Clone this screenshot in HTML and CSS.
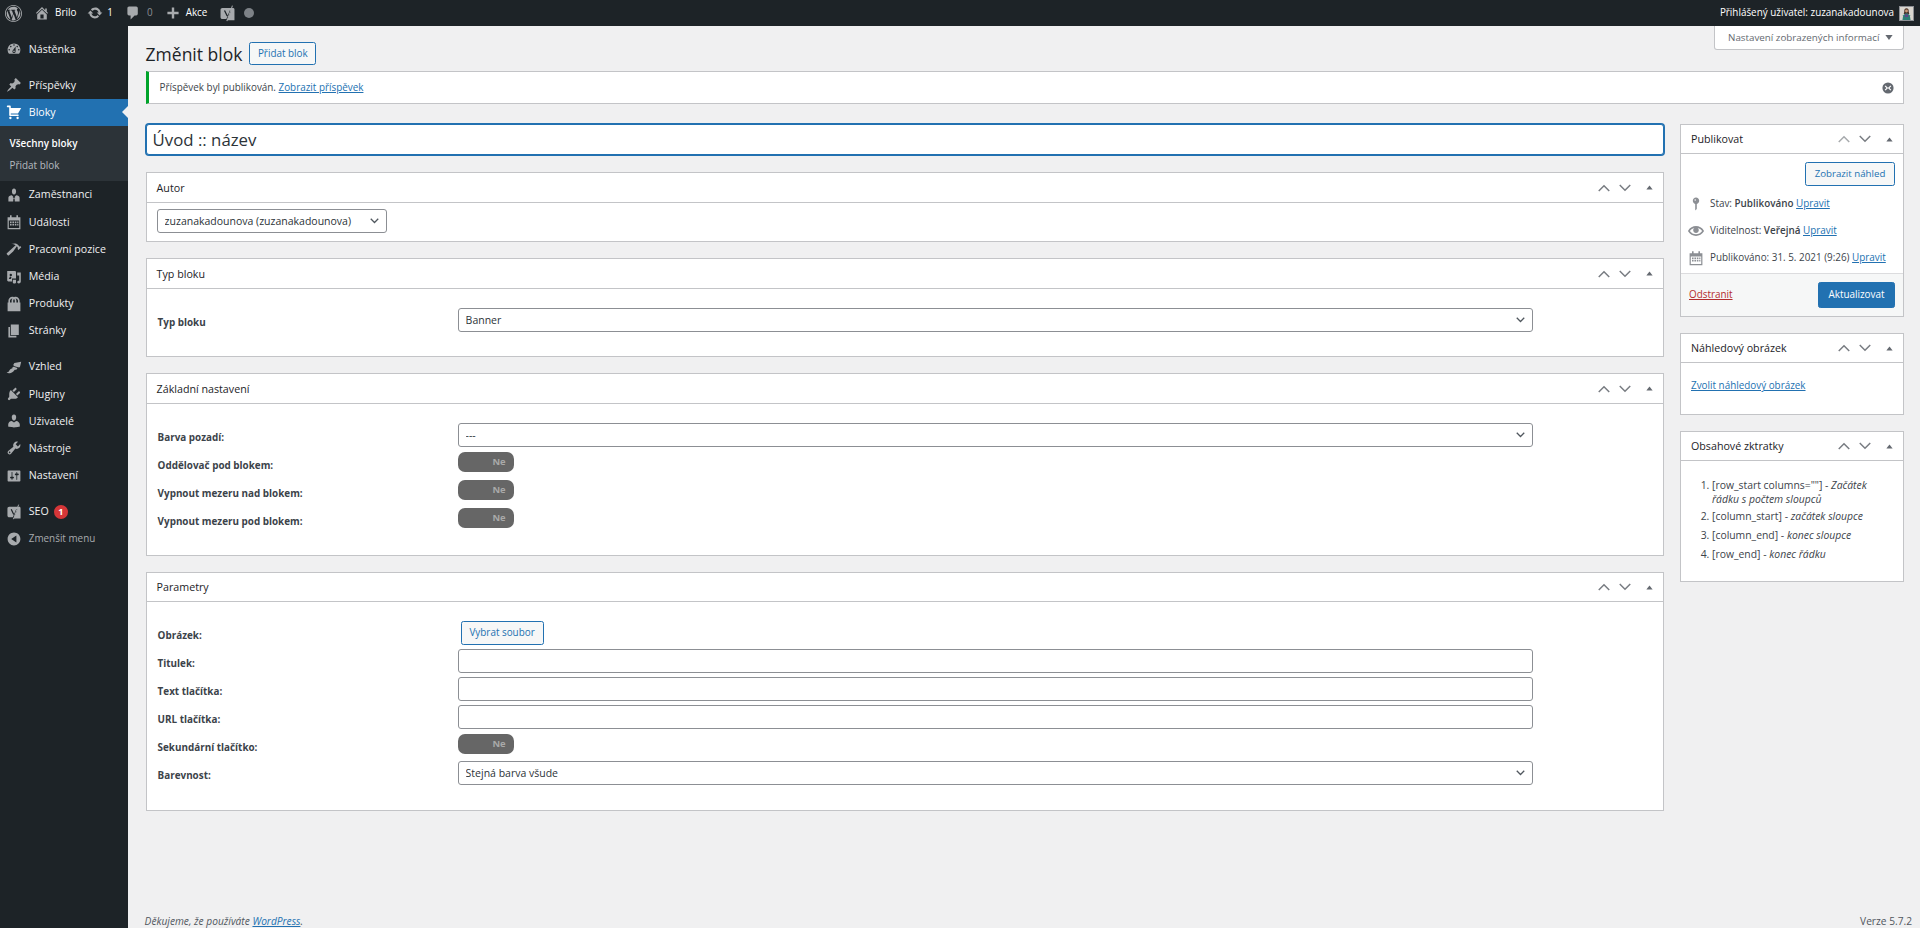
FILE: index.html
```html
<!DOCTYPE html>
<html lang="cs">
<head>
<meta charset="utf-8">
<title>Změnit blok</title>
<link rel="stylesheet" href="styles.css">
</head>
<body>
<svg class="defs" width="0" height="0" aria-hidden="true">
  <symbol id="i-up" viewBox="0 0 16 10"><path d="M1 9l7-7 7 7" fill="none" stroke="currentColor" stroke-width="2"/></symbol>
  <symbol id="i-down" viewBox="0 0 16 10"><path d="M1 1l7 7 7-7" fill="none" stroke="currentColor" stroke-width="2"/></symbol>
  <symbol id="i-tri" viewBox="0 0 10 6"><path d="M5 0l4.500 6h-9z" fill="currentColor"/></symbol>
  <symbol id="i-yoast" viewBox="0 0 20 20"><path fill="currentColor" d="M4 3.500h12.500c1 0 1.700.7 1.700 1.700V18H8.500l1-1.500H4c-1.300 0-2.200-.9-2.200-2.200V5.700C1.800 4.400 2.700 3.500 4 3.500z"/><path fill="none" stroke="#1d2327" stroke-width="1.500" d="M6.500 6.500l3.200 6.500M13.500 6.500l-4.500 11"/><path fill="none" stroke="currentColor" stroke-width="1.200" d="M15.800.8L9.300 19"/></symbol>
</svg>

<header class="adminbar">
  <div class="bar-left">
    <span class="bar-item bar-logo"><svg class="bar-icon" viewBox="0 0 20 20"><path d="M20 10c0-5.520-4.480-10-10-10S0 4.480 0 10s4.480 10 10 10 10-4.480 10-10zM10 1.010c4.970 0 8.990 4.020 8.990 8.990s-4.020 8.990-8.990 8.990S1.010 14.970 1.010 10 5.030 1.010 10 1.010zM8.010 14.820L4.960 6.610c.49-.03 1.050-.08 1.050-.08.43-.05.38-1.010-.06-.99 0 0-1.290.1-2.130.1-.15 0-.33 0-.52-.01 1.440-2.170 3.900-3.600 6.700-3.600 2.090 0 3.990.79 5.410 2.090-.6-.09-1.450.35-1.450 1.450 0 .68.38 1.250.8 1.920.31.55.5 1.250.5 2.280 0 1.390-1.300 4.660-1.300 4.660l-2.830-7.790c.5-.03.76-.17.76-.17.45-.05.39-1.010-.06-.99 0 0-1.430.12-2.350.12-.85 0-2.200-.12-2.200-.12-.45-.02-.5.94-.05.99 0 0 .44.05.91.08l1.360 3.700-1.900 5.660zM17.200 6.500c.5 1 .8 2.200.8 3.500 0 3-1.600 5.500-4 6.900l2.400-7c.5-1.100.8-2.200.8-3.400zM2 10c0-1.200.3-2.300.7-3.300l3.800 10.500C3.900 15.900 2 13.200 2 10zM10.100 10.700l2.500 6.800.1.2c-.9.3-1.800.5-2.700.5-.8 0-1.500-.1-2.300-.3z"/></svg></span>
    <span class="bar-item bar-home"><svg class="bar-icon" viewBox="0 0 20 20"><path d="M16 8.500l1.530 1.530-1.060 1.060L10 4.620l-6.470 6.470-1.060-1.060L10 2.500l4 4v-2h2v4zm-6-2.460l6 5.990V18H4v-5.970zM12 17v-5H8v5h4z"/></svg>Brilo</span>
    <span class="bar-item bar-updates"><svg class="bar-icon" viewBox="0 0 20 20"><path d="M10.200 3.280c3.530 0 6.430 2.610 6.920 6h2.080l-3.500 4-3.500-4h2.320c-.45-1.970-2.210-3.440-4.320-3.440-1.450 0-2.730.71-3.540 1.780L4.950 5.660C6.230 4.200 8.110 3.280 10.200 3.280zm-.4 13.440c-3.520 0-6.430-2.610-6.920-6H.8l3.500-4c1.170 1.330 2.330 2.670 3.500 4H5.480c.45 1.970 2.210 3.440 4.320 3.440 1.450 0 2.730-.71 3.540-1.780l1.710 1.950c-1.280 1.460-3.150 2.390-5.250 2.390z"/></svg>1</span>
    <span class="bar-item bar-comments"><svg class="bar-icon" viewBox="0 0 20 20"><path d="M5 2h9c1.100 0 2 .9 2 2v7c0 1.100-.9 2-2 2h-2l-5 5v-5H5c-1.100 0-2-.9-2-2V4c0-1.100.9-2 2-2z"/></svg><span class="bar-dim">0</span></span>
    <span class="bar-item bar-new"><svg class="bar-icon" viewBox="0 0 20 20"><path d="M17 8.500v3h-5.500V17h-3v-5.500H3v-3h5.500V3h3v5.500z"/></svg>Akce</span>
    <span class="bar-item bar-yoast"><svg class="bar-icon yoast-icon"><use href="#i-yoast"/></svg><span class="bar-dot"></span></span>
  </div>
  <div class="bar-right">Přihlášený uživatel: zuzanakadounova
    <svg class="avatar" viewBox="0 0 16 16"><rect width="16" height="16" fill="#d9d6cf"/><path d="M5.300 5.500C5 2.500 6.400 1.500 8 1.500s3 1 2.700 4l.7 3H4.600z" fill="#4a3024"/><circle cx="8" cy="5" r="1.800" fill="#c99a78"/><path d="M3 16l1-6 2.500-2h3L12 10l1 6z" fill="#2d7f74"/><path d="M6.500 8L8 11l1.500-3 .8 4H5.700z" fill="#6a3a8c"/></svg>
  </div>
</header>

<div class="layout">
  <nav class="sidebar">
    <ul class="menu">
      <li class="menu-item"><svg class="menu-icon" viewBox="0 0 20 20"><path d="M3.760 16h12.480c1.100-1.370 1.760-3.110 1.760-5 0-4.420-3.580-8-8-8s-8 3.580-8 8c0 1.890.66 3.630 1.760 5zM10 4c.55 0 1 .45 1 1s-.45 1-1 1-1-.45-1-1 .45-1 1-1zM6 6c.55 0 1 .45 1 1s-.45 1-1 1-1-.45-1-1 .45-1 1-1zm8 0c.55 0 1 .45 1 1s-.45 1-1 1-1-.45-1-1 .45-1 1-1zm-5.370 5.550L12 7v6c0 1.100-.9 2-2 2s-2-.9-2-2c0-.57.24-1.080.63-1.450zM4 10c.55 0 1 .45 1 1s-.45 1-1 1-1-.45-1-1 .45-1 1-1zm12 0c.55 0 1 .45 1 1s-.45 1-1 1-1-.45-1-1 .45-1 1-1zm-5 3c0-.55-.45-1-1-1s-1 .45-1 1 .45 1 1 1 1-.45 1-1z" fill-rule="evenodd"/></svg>Nástěnka</li>
      <li class="menu-sep"></li>
      <li class="menu-item"><svg class="menu-icon" viewBox="0 0 20 20"><path d="M10.440 3.020l1.820-1.820 6.360 6.350-1.830 1.820c-1.050-.68-2.480-.57-3.410.36l-.75.75c-.92.93-1.040 2.350-.35 3.410l-1.830 1.820-2.410-2.410-2.800 2.790c-.42.42-3.380 2.710-3.800 2.290s1.860-3.390 2.280-3.810l2.790-2.790L4.100 9.360l1.830-1.820c1.050.69 2.480.57 3.400-.36l.75-.75c.93-.92 1.050-2.350.36-3.410z"/></svg>Příspěvky</li>
      <li class="menu-item is-current"><svg class="menu-icon" viewBox="0 0 20 20"><path d="M6 13h9c.55 0 1 .45 1 1s-.45 1-1 1H5c-.55 0-1-.45-1-1V4H2c-.55 0-1-.45-1-1s.45-1 1-1h3c.55 0 1 .45 1 1v2h13l-4 7H6v1zm-.5 3c.83 0 1.500.67 1.500 1.500S6.330 19 5.500 19 4 18.330 4 17.500 4.670 16 5.500 16zm9 0c.83 0 1.500.67 1.500 1.500s-.67 1.500-1.500 1.500-1.500-.67-1.500-1.500.67-1.500 1.500-1.500z"/></svg>Bloky</li>
      <li class="submenu">
        <div class="sub-item is-active">Všechny bloky</div>
        <div class="sub-item">Přidat blok</div>
      </li>
      <li class="menu-item"><svg class="menu-icon" viewBox="0 0 20 20"><path d="M10 9.500c-1.900 0-2.600-2.200-2.600-3.900C7.400 3.500 8.400 2 10 2s2.600 1.500 2.600 3.600c0 1.700-.7 3.900-2.600 3.900zM7.300 10.200l1.700 2-.5 1.300h3l-.5-1.300 1.700-2c2.300.3 4.300 1.300 4.300 3.300V18H3v-4.500c0-2 2-3 4.300-3.300zM9.200 14.500L9 18h2l-.2-3.500z" fill-rule="evenodd"/></svg>Zaměstnanci</li>
      <li class="menu-item"><svg class="menu-icon" viewBox="0 0 20 20"><path fill-rule="evenodd" d="M5 1.500h2V4h6V1.500h2V4h3v15H2V4h3zM3.500 8v9.500h13V8zM5 9.500h2v2H5zM8 9.500h2v2H8zM11 9.500h2v2h-2zM14 9.500h1.500v2H14zM5 12.500h2v2H5zM8 12.500h2v2H8zM11 12.500h2v2h-2zM14 12.500h1.500v2H14z"/></svg>Události</li>
      <li class="menu-item"><svg class="menu-icon" viewBox="0 0 20 20"><path d="M17.700 6.320l1.410 1.420-3.470 3.410-1.420-1.420.84-.82c-.32-.76-.81-1.570-1.510-2.310l-4.610 6.590-5.260 4.700c-.39.39-1.020.39-1.420 0l-1.200-1.210c-.39-.39-.39-1.020 0-1.410l10.970-9.920c-1.370-.86-3.210-1.460-5.670-1.480 2.700-.82 4.950-.93 6.580-.3 1.700.66 2.820 2.200 3.910 3.580z"/></svg>Pracovní pozice</li>
      <li class="menu-item"><svg class="menu-icon" viewBox="0 0 20 20"><path fill-rule="evenodd" d="M1.500 2.500H11c.8 0 1.500.7 1.500 1.500v8h-5v3.500H3c-.8 0-1.500-.7-1.500-1.500zM6 6a1.500 1.500 0 1 0 0 3 1.500 1.500 0 0 0 0-3zM3.500 12.500H6l1-2-2-1zM14 4.500h4.500v11c0 1.600-1.300 2.500-2.500 2.500s-2-.8-2-1.700.9-1.700 2-1.700h.5V8H14zM8.500 13.500h4V17c0 .6-.4 1-1 1h-2c-.6 0-1-.4-1-1z"/></svg>Média</li>
      <li class="menu-item"><svg class="menu-icon" viewBox="0 0 20 20"><path fill-rule="evenodd" d="M17 8h1v11H2V8h1V6c0-2.760 2.240-5 5-5 .71 0 1.390.15 2 .42.61-.27 1.290-.42 2-.42 2.760 0 5 2.240 5 5v2zM5 6v2h2V6c0-1.130.39-2.160 1.020-3H8C6.350 3 5 4.350 5 6zm10 2V6c0-1.650-1.350-3-3-3h-.02c.63.84 1.020 1.870 1.020 3v2h2zm-5-4.220C9.390 4.330 9 5.120 9 6v2h2V6c0-.88-.39-1.670-1-2.220z"/></svg>Produkty</li>
      <li class="menu-item"><svg class="menu-icon" viewBox="0 0 20 20"><path d="M6 15V2h10v13H6zm-1 1h8v2H3V5h2v11z"/></svg>Stránky</li>
      <li class="menu-sep"></li>
      <li class="menu-item"><svg class="menu-icon" viewBox="0 0 20 20"><path d="M19 3.500l-1.500 6.300c-.3.9-1.500.9-2.500.6l-4.300-1.300C9.700 8.800 9 8 9.300 7l1.200-2zM9.500 9.800l4.800 1.500c-.6 1.900-1.800 2.500-3.300 2.200-1.100 1.100-2.100 3.100-5 3.900-1.700.4-3.700.4-5.300-.3 1.700-.3 2.700-1.100 3.300-2.300.8-1.500 1.700-2.900 4-3.300-.2-.5 0-1.100 1.500-1.700z"/></svg>Vzhled</li>
      <li class="menu-item"><svg class="menu-icon" viewBox="0 0 20 20"><path d="M13.110 4.360L9.870 7.600 8 5.730l3.240-3.240c.35-.34 1.050-.2 1.560.32.520.51.66 1.210.31 1.550zm-8 1.770l.91-1.120 9.010 9.010-1.190.84c-.71.71-2.630 1.160-3.820 1.160H6.140L4.900 17.260c-.59.59-1.540.59-2.120 0-.59-.58-.59-1.530 0-2.120l1.240-1.240v-3.880c0-1.130.4-3.190 1.090-3.890zm7.260 3.970l3.240-3.240c.34-.35 1.040-.21 1.550.31.520.51.66 1.210.31 1.550l-3.240 3.250z"/></svg>Pluginy</li>
      <li class="menu-item"><svg class="menu-icon" viewBox="0 0 20 20"><path d="M10 9.250c-2.270 0-2.730-3.440-2.730-3.440C7 4.020 7.820 2 9.970 2c2.160 0 2.980 2.020 2.710 3.810 0 0-.41 3.440-2.680 3.440zm0 2.570L12.720 10c2.390 0 4.520 2.330 4.520 4.530v2.490s-3.650 1.130-7.240 1.130c-3.650 0-7.240-1.130-7.240-1.130v-2.490c0-2.250 1.940-4.480 4.470-4.480z"/></svg>Uživatelé</li>
      <li class="menu-item"><svg class="menu-icon" viewBox="0 0 20 20"><path d="M16.680 9.770c-1.340 1.340-3.300 1.670-4.950.99l-5.410 6.520c-.99.99-2.590.99-3.580 0s-.99-2.590 0-3.570l6.520-5.420c-.68-1.650-.35-3.610.99-4.950 1.280-1.280 3.120-1.620 4.720-1.060l-2.890 2.890 2.820 2.820 2.860-2.870c.53 1.580.18 3.390-1.080 4.670zM3.810 16.210c.4.39 1.040.39 1.430 0 .4-.4.4-1.040 0-1.430-.39-.4-1.030-.4-1.430 0-.39.39-.39 1.030 0 1.430z"/></svg>Nástroje</li>
      <li class="menu-item"><svg class="menu-icon" viewBox="0 0 20 20"><path d="M18 16V4c0-.55-.45-1-1-1H3c-.55 0-1 .45-1 1v12c0 .55.45 1 1 1h14c.55 0 1-.45 1-1zM8 11h1c.55 0 1 .45 1 1s-.45 1-1 1H8v1.500c0 .28-.22.5-.5.5s-.5-.22-.5-.5V13H6c-.55 0-1-.45-1-1s.45-1 1-1h1V5.500c0-.28.22-.5.5-.5s.5.22.5.5V11zm5-2h-1c-.55 0-1-.45-1-1s.45-1 1-1h1V5.500c0-.28.22-.5.5-.5s.5.22.5.5V7h1c.55 0 1 .45 1 1s-.45 1-1 1h-1v5.500c0 .28-.22.5-.5.5s-.5-.22-.5-.5V9z" fill-rule="evenodd"/></svg>Nastavení</li>
      <li class="menu-sep"></li>
      <li class="menu-item"><svg class="menu-icon"><use href="#i-yoast"/></svg>SEO<span class="badge">1</span></li>
      <li class="menu-item menu-collapse"><svg class="menu-icon" viewBox="0 0 20 20"><path fill-rule="evenodd" d="M18 10c0-4.420-3.580-8-8-8s-8 3.580-8 8 3.580 8 8 8 8-3.580 8-8zm-5-4.500v9L6.500 10z"/></svg>Zmenšit menu</li>
    </ul>
  </nav>

  <div class="content">
    <button class="screen-tab" type="button">Nastavení zobrazených informací<svg class="screen-tri"><use href="#i-tri"/></svg></button>
    <main class="wrap">
      <div class="title-row">
        <h1 class="page-title">Změnit blok</h1>
        <a class="btn btn-outline" href="#">Přidat blok</a>
      </div>
      <div class="notice">
        <p>Příspěvek byl publikován. <a href="#">Zobrazit příspěvek</a></p>
        <svg class="notice-x" viewBox="0 0 20 20"><path fill-rule="evenodd" d="M10 2a8 8 0 1 0 0 16 8 8 0 0 0 0-16zm3.500 4.300l1.200 1.200L12.200 10l2.500 2.500-1.200 1.200-2.500-2.500-1-1-1 1-2.500 2.500-1.200-1.200L7.800 10 5.300 7.500l1.200-1.200L9 8.800l1 1 1-1z"/></svg>
      </div>

      <div class="columns">
        <div class="col-main">
          <input class="title-input" type="text" value="Úvod :: název">

          <section class="box">
            <div class="box-head"><h2>Autor</h2><div class="head-ctl"><svg class="ctl"><use href="#i-up"/></svg><svg class="ctl"><use href="#i-down"/></svg><svg class="ctl-tri"><use href="#i-tri"/></svg></div></div>
            <div class="box-body body-author">
              <select class="field field-author"><option>zuzanakadounova (zuzanakadounova)</option></select>
            </div>
          </section>

          <section class="box">
            <div class="box-head"><h2>Typ bloku</h2><div class="head-ctl"><svg class="ctl"><use href="#i-up"/></svg><svg class="ctl"><use href="#i-down"/></svg><svg class="ctl-tri"><use href="#i-tri"/></svg></div></div>
            <div class="box-body body-form">
              <div class="form-row"><label>Typ bloku</label><select class="field"><option>Banner</option></select></div>
            </div>
          </section>

          <section class="box">
            <div class="box-head"><h2>Základní nastavení</h2><div class="head-ctl"><svg class="ctl"><use href="#i-up"/></svg><svg class="ctl"><use href="#i-down"/></svg><svg class="ctl-tri"><use href="#i-tri"/></svg></div></div>
            <div class="box-body body-form">
              <div class="form-row"><label>Barva pozadí:</label><select class="field"><option>---</option></select></div>
              <div class="form-row"><label>Oddělovač pod blokem:</label><span class="toggle">Ne</span></div>
              <div class="form-row"><label>Vypnout mezeru nad blokem:</label><span class="toggle">Ne</span></div>
              <div class="form-row"><label>Vypnout mezeru pod blokem:</label><span class="toggle">Ne</span></div>
            </div>
          </section>

          <section class="box box-params">
            <div class="box-head"><h2>Parametry</h2><div class="head-ctl"><svg class="ctl"><use href="#i-up"/></svg><svg class="ctl"><use href="#i-down"/></svg><svg class="ctl-tri"><use href="#i-tri"/></svg></div></div>
            <div class="box-body body-form">
              <div class="form-row"><label>Obrázek:</label><a class="btn btn-outline btn-file" href="#">Vybrat soubor</a></div>
              <div class="form-row"><label>Titulek:</label><input class="field" type="text"></div>
              <div class="form-row"><label>Text tlačítka:</label><input class="field" type="text"></div>
              <div class="form-row"><label>URL tlačítka:</label><input class="field" type="text"></div>
              <div class="form-row"><label>Sekundární tlačítko:</label><span class="toggle">Ne</span></div>
              <div class="form-row"><label>Barevnost:</label><select class="field"><option>Stejná barva všude</option></select></div>
            </div>
          </section>
        </div>

        <aside class="col-side">
          <section class="box">
            <div class="box-head"><h2>Publikovat</h2><div class="head-ctl"><svg class="ctl is-off"><use href="#i-up"/></svg><svg class="ctl"><use href="#i-down"/></svg><svg class="ctl-tri"><use href="#i-tri"/></svg></div></div>
            <div class="pub-body">
              <div class="pub-preview"><a class="btn btn-outline" href="#">Zobrazit náhled</a></div>
              <div class="pub-row"><svg class="pub-icon" viewBox="0 0 20 20"><path fill-rule="evenodd" d="M14 6c0 1.860-1.280 3.410-3 3.860V16c0 1-2 2-2 2V9.860c-1.720-.45-3-2-3-3.860 0-2.210 1.790-4 4-4s4 1.790 4 4zM8 5c0 .55.45 1 1 1s1-.45 1-1-.45-1-1-1-1 .45-1 1z"/></svg><span>Stav: <b>Publikováno</b> <a href="#">Upravit</a></span></div>
              <div class="pub-row"><svg class="pub-icon" viewBox="0 0 20 20"><path d="M19.700 9.400C17.700 6 14 3.900 10 3.900S2.300 6 .3 9.400L0 10l.3.6c2 3.400 5.700 5.500 9.700 5.500s7.700-2.100 9.700-5.500l.3-.6-.3-.6zM10 14.100c-3.100 0-6-1.600-7.700-4.100C3.600 8 5.700 6.600 8 6.100c-.9.6-1.500 1.700-1.500 2.900 0 1.900 1.600 3.500 3.500 3.500s3.500-1.600 3.500-3.500c0-1.200-.6-2.300-1.500-2.900 2.300.5 4.400 1.900 5.700 3.900-1.700 2.500-4.600 4.100-7.700 4.100z"/></svg><span>Viditelnost: <b>Veřejná</b> <a href="#">Upravit</a></span></div>
              <div class="pub-row"><svg class="pub-icon" viewBox="0 0 20 20"><path fill-rule="evenodd" d="M5 1.500h2V4h6V1.500h2V4h3v15H2V4h3zM3.500 8v9.500h13V8zM5 9.500h2v2H5zM8 9.500h2v2H8zM11 9.500h2v2h-2zM14 9.500h1.500v2H14zM5 12.500h2v2H5zM8 12.500h2v2H8zM11 12.500h2v2h-2zM14 12.500h1.500v2H14z"/></svg><span>Publikováno: <span class="pub-date">31. 5. 2021 (9:26)</span> <a href="#">Upravit</a></span></div>
            </div>
            <div class="pub-foot">
              <a class="link-danger" href="#">Odstranit</a>
              <a class="btn btn-primary" href="#">Aktualizovat</a>
            </div>
          </section>

          <section class="box">
            <div class="box-head"><h2>Náhledový obrázek</h2><div class="head-ctl"><svg class="ctl"><use href="#i-up"/></svg><svg class="ctl"><use href="#i-down"/></svg><svg class="ctl-tri"><use href="#i-tri"/></svg></div></div>
            <div class="thumb-body"><a href="#">Zvolit náhledový obrázek</a></div>
          </section>

          <section class="box">
            <div class="box-head"><h2>Obsahové zktratky</h2><div class="head-ctl"><svg class="ctl"><use href="#i-up"/></svg><svg class="ctl"><use href="#i-down"/></svg><svg class="ctl-tri"><use href="#i-tri"/></svg></div></div>
            <ol class="shortcodes">
              <li>[row_start columns=""] - <em>Začátek řádku s počtem sloupců</em></li>
              <li>[column_start] - <em>začátek sloupce</em></li>
              <li>[column_end] - <em>konec sloupce</em></li>
              <li>[row_end] - <em>konec řádku</em></li>
            </ol>
          </section>
        </aside>
      </div>
    </main>
    <footer class="foot">
      <em>Děkujeme, že používáte <a href="#">WordPress</a>.</em>
      <span>Verze 5.7.2</span>
    </footer>
  </div>
</div>
</body>
</html>
```

FILE: styles.css
```css
* { box-sizing: border-box; }
html, body { margin: 0; padding: 0; }
body {
  min-height: 928px;
  display: flex;
  flex-direction: column;
  background: #f0f0f1;
  color: #3c434a;
  font-family: "Open Sans", "Liberation Sans", sans-serif;
  font-size: 9.9px;
  line-height: 1.4;
}
a { color: #2271b1; }
.defs { position: absolute; }

/* admin bar */
.adminbar {
  height: 26px;
  flex: none;
  display: flex;
  justify-content: space-between;
  align-items: center;
  background: #1d2327;
  color: #fff;
}
.bar-left, .bar-right { display: flex; align-items: center; height: 100%; }
.bar-item { display: flex; align-items: center; height: 100%; }
.bar-icon { width: 16px; height: 16px; fill: #a7aaad; color: #a7aaad; }
.bar-logo { padding-left: 5px; }
.bar-logo .bar-icon { width: 17px; height: 17px; }
.bar-home { margin-left: 12px; gap: 5px; }
.bar-updates { margin-left: 11px; gap: 4px; }
.bar-comments { margin-left: 12px; gap: 6px; }
.bar-dim { color: #8c8f94; }
.bar-new { margin-left: 12px; gap: 5px; }
.bar-yoast { margin-left: 12px; gap: 8px; }
.yoast-icon { width: 17px; height: 17px; }
.bar-dot { width: 10px; height: 10px; border-radius: 50%; background: #7d8287; }
.bar-right { padding-right: 6px; gap: 5px; }
.avatar { width: 15px; height: 15px; border: 1px solid #8c8f94; }

/* layout */
.layout { flex: 1; display: flex; }
.sidebar { width: 128px; flex: none; background: #1d2327; }
.menu { list-style: none; margin: 0; padding: 9.6px 0 0; }
.menu-item {
  position: relative;
  height: 27.2px;
  display: flex;
  align-items: center;
  color: #f0f0f1;
  font-size: 10.65px;
}
.menu-icon {
  width: 16px;
  height: 16px;
  margin: 0 6.4px;
  fill: #a7aaad;
  color: #a7aaad;
  flex: none;
}
.menu-sep { height: 8.8px; }
.is-current { background: #2271b1; color: #fff; }
.is-current .menu-icon { fill: #fff; }
.is-current::after {
  content: "";
  position: absolute;
  right: 0;
  top: 50%;
  margin-top: -6.4px;
  border: 6.4px solid transparent;
  border-right-color: #f0f0f1;
  border-left-width: 0;
}
.submenu { height: 55.4px; padding-top: 6px; background: #2c3338; }
.sub-item { height: 22px; line-height: 22px; padding-left: 9.6px; color: rgba(240, 246, 252, .7); }
.is-active { color: #fff; font-weight: 600; }
.badge {
  width: 14px;
  height: 14px;
  margin-left: 5px;
  border-radius: 50%;
  background: #d63638;
  color: #fff;
  font-size: 9px;
  font-weight: 700;
  line-height: 14px;
  text-align: center;
}
.menu-collapse { font-size: 9.9px; color: #a7aaad; }

/* content */
.content { position: relative; flex: 1; min-width: 0; display: flex; flex-direction: column; padding: 0 16px 0 17.6px; }
.screen-tab {
  position: absolute;
  top: 0;
  right: 16px;
  width: 190px;
  height: 24px;
  display: flex;
  align-items: center;
  padding: 0 0 0 13px;
  background: #fff;
  border: 1px solid #c3c4c7;
  border-top: 0;
  border-radius: 0 0 3px 3px;
  color: #646970;
  font: inherit;
  font-size: 9.8px;
}
.screen-tri { width: 8px; height: 5px; margin-left: 6px; color: #646970; transform: rotate(180deg); }
.wrap { flex: 1; padding-top: 16px; }
.title-row { height: 23px; display: flex; align-items: center; gap: 7px; }
.page-title { margin: 0; padding-top: 1px; font-size: 17.5px; font-weight: 400; color: #1d2327; line-height: 23px; }
.btn {
  display: inline-flex;
  align-items: center;
  justify-content: center;
  height: 23px;
  padding: 0 7.5px;
  border: 1px solid #2271b1;
  border-radius: 2.4px;
  text-decoration: none;
  white-space: nowrap;
}
.btn-outline { background: #f6f7f7; color: #2271b1; }
.btn-primary { width: 77px; height: 26px; background: #2271b1; color: #fff; }
.notice {
  height: 33px;
  margin-top: 6px;
  display: flex;
  align-items: center;
  justify-content: space-between;
  padding: 0 8px 0 11px;
  background: #fff;
  border: 1px solid #c3c4c7;
  border-left: 3px solid #00a32a;
}
.notice p { margin: 0; }
.notice-x { width: 14px; height: 14px; fill: #646970; }

.columns { display: flex; gap: 16px; margin-top: 20px; align-items: flex-start; }
.col-main { flex: 1; min-width: 0; }
.col-side { width: 224px; flex: none; }
.title-input {
  display: block;
  width: 100%;
  height: 31px;
  margin-bottom: 17px;
  padding: 0 6px;
  border: 1px solid #2271b1;
  box-shadow: 0 0 0 1px #2271b1;
  border-radius: 3px;
  color: #2c3338;
  font: inherit;
  font-size: 16.8px;
  outline: 0;
}

.box { background: #fff; border: 1px solid #c3c4c7; margin-bottom: 16px; }
.box-head {
  height: 30px;
  display: flex;
  align-items: center;
  justify-content: space-between;
  padding-left: 10px;
  border-bottom: 1px solid #c3c4c7;
}
.box-params .box-head, .col-side .box-head { height: 29px; }
.box-head h2 { margin: 0; padding-top: 1px; font-size: 10.7px; font-weight: 400; color: #1d2327; }
.head-ctl { display: flex; align-items: center; height: 100%; }
.ctl { width: 12px; height: 8px; margin: 0 4.5px; color: #787c82; }
.ctl.is-off { color: #a7aaad; }
.ctl-tri { width: 7px; height: 5px; margin: 0 10px 0 11px; color: #646970; }

.body-author { padding: 6px 10px 8px; }
.body-form { padding: 19px 11px 20px; }
.box-params .body-form { padding-bottom: 21px; }
.form-row { display: flex; height: 28px; align-items: flex-start; }
.form-row label { width: 300px; flex: none; line-height: 28px; font-weight: 700; color: #3c434a; }
.field {
  display: block;
  width: 1075px;
  height: 24px;
  padding: 0 7px;
  background: #fff;
  border: 1px solid #8c8f94;
  border-radius: 3px;
  color: #2c3338;
  font: inherit;
  font-size: 10.5px;
}
select.field {
  appearance: none;
  padding-right: 20px;
  background: #fff url("data:image/svg+xml,%3Csvg xmlns='http://www.w3.org/2000/svg' viewBox='0 0 12 8'%3E%3Cpath d='M1 1l5 5 5-5' fill='none' stroke='%2350575e' stroke-width='1.7'/%3E%3C/svg%3E") no-repeat right 7px center / 9px 6px;
}
.field-author { width: 230px; }
.toggle {
  width: 56px;
  height: 20px;
  margin-top: 1px;
  padding-right: 8px;
  background: #666;
  border-radius: 7px;
  color: #a9a9a9;
  font-size: 9.4px;
  font-weight: 700;
  line-height: 19px;
  text-align: right;
}
.btn-file { width: 83px; height: 24px; margin-left: 3px; padding: 0; }

.pub-body { padding-top: 8px; height: 119px; }
.pub-preview { display: flex; justify-content: flex-end; padding-right: 8px; margin-bottom: 4px; }
.pub-preview .btn { width: 90px; height: 24px; padding: 0; font-size: 9.7px; }
.pub-row { height: 27px; display: flex; align-items: center; padding-left: 7px; }
.pub-icon { width: 16px; height: 16px; margin-right: 6px; fill: #8c8f94; flex: none; }
.pub-row b { font-weight: 600; }
.pub-foot {
  height: 43px;
  display: flex;
  align-items: center;
  justify-content: space-between;
  padding: 0 8px;
  background: #f6f7f7;
  border-top: 1px solid #dcdcde;
}
.link-danger { color: #b32d2e; }
.thumb-body { height: 51px; padding: 16px 10px 0; }
.shortcodes { height: 120px; margin: 0; padding: 17px 10px 0 31px; font-size: 10.4px; }
.shortcodes li { margin-bottom: 5px; line-height: 14px; }
.shortcodes li:first-child { margin-bottom: 3px; }

.foot { height: 28px; flex: none; display: flex; justify-content: space-between; align-items: flex-end; margin: 0 -8px 0 -1px; color: #50575e; font-size: 10.2px; }
```
